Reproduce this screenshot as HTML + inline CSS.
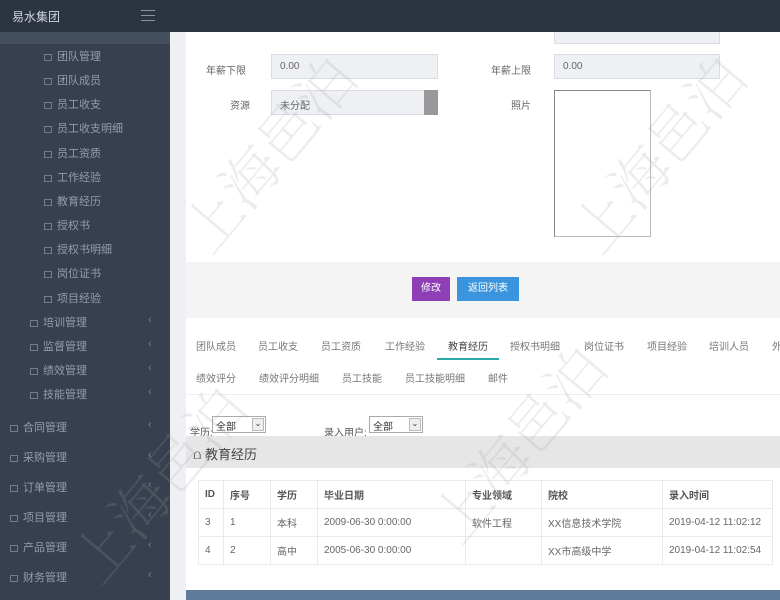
<!DOCTYPE html>
<html><head><meta charset="utf-8"><style>
*{margin:0;padding:0;box-sizing:border-box}
body{width:780px;height:600px;overflow:hidden;position:relative;font-family:"Liberation Sans","Noto Sans CJK SC",sans-serif;font-size:11px;color:#555;background:#fff}
#side{position:absolute;left:0;top:0;width:170px;height:600px;background:#36404f}
#top{position:absolute;left:0;top:0;width:780px;height:32px;background:#2c3441}
#top .logo{position:absolute;left:12px;top:8px;color:#cfd5dc;font-size:12px}
#top .bars{position:absolute;left:141px;top:10px;width:14px}
#top .bars i{display:block;height:1px;background:#8a94a0;margin-bottom:4px}
.it{position:absolute;color:#949daa;font-size:11px;white-space:nowrap}
.it b{display:inline-block;width:8px;height:7px;border:1px solid #737d8b;margin-right:5px;vertical-align:-1px}
.ar{position:absolute;left:148px;color:#737d8b;font-size:11px}
#gut{position:absolute;left:170px;top:32px;width:16px;height:568px;background:#eef0f3}
#main{position:absolute;left:186px;top:32px;width:594px;height:568px;background:#fff}
.lbl{position:absolute;font-size:10px;color:#666}
.inp{position:absolute;background:#eef0f4;border:1px solid #d9dce2;font-size:10px;color:#666;padding:6px 8px}
.btnbar{position:absolute;left:0;top:230px;width:594px;height:56px;background:#f4f4f4}
.btn{position:absolute;height:24px;color:#fff;font-size:10px;text-align:center;line-height:24px}
.tab{position:absolute;font-size:10px;color:#777;white-space:nowrap}
.wm{position:absolute;color:rgba(160,160,160,.2);font-size:58px;transform:rotate(-50deg);white-space:nowrap;font-family:"Noto Serif CJK SC",serif;font-weight:200}
table{position:absolute;left:12px;top:448px;border-collapse:collapse;font-size:10px;color:#666}
td{border:1px solid #eaeaea;height:28px;padding:0 6px;vertical-align:middle}
tr:first-child td{font-weight:bold;color:#555}
</style></head><body>
<div id="side">
<div style="position:absolute;left:0;top:32px;width:170px;height:12px;background:#45505f"></div>
<div class="it" style="left:44px;top:48px"><b></b>团队管理</div>
<div class="it" style="left:44px;top:72px"><b></b>团队成员</div>
<div class="it" style="left:44px;top:96px"><b></b>员工收支</div>
<div class="it" style="left:44px;top:120px"><b></b>员工收支明细</div>
<div class="it" style="left:44px;top:145px"><b></b>员工资质</div>
<div class="it" style="left:44px;top:169px"><b></b>工作经验</div>
<div class="it" style="left:44px;top:193px"><b></b>教育经历</div>
<div class="it" style="left:44px;top:217px"><b></b>授权书</div>
<div class="it" style="left:44px;top:241px"><b></b>授权书明细</div>
<div class="it" style="left:44px;top:265px"><b></b>岗位证书</div>
<div class="it" style="left:44px;top:290px"><b></b>项目经验</div>
<div class="it" style="left:30px;top:314px"><b></b>培训管理</div><span class="ar" style="top:314px">‹</span>
<div class="it" style="left:30px;top:338px"><b></b>监督管理</div><span class="ar" style="top:338px">‹</span>
<div class="it" style="left:30px;top:362px"><b></b>绩效管理</div><span class="ar" style="top:362px">‹</span>
<div class="it" style="left:30px;top:386px"><b></b>技能管理</div><span class="ar" style="top:386px">‹</span>
<div class="it" style="left:10px;top:419px"><b></b>合同管理</div><span class="ar" style="top:419px">‹</span>
<div class="it" style="left:10px;top:449px"><b></b>采购管理</div><span class="ar" style="top:449px">‹</span>
<div class="it" style="left:10px;top:479px"><b></b>订单管理</div><span class="ar" style="top:479px">‹</span>
<div class="it" style="left:10px;top:509px"><b></b>项目管理</div><span class="ar" style="top:509px">‹</span>
<div class="it" style="left:10px;top:539px"><b></b>产品管理</div><span class="ar" style="top:539px">‹</span>
<div class="it" style="left:10px;top:569px"><b></b>财务管理</div><span class="ar" style="top:569px">‹</span>
</div>
<div id="top"><span class="logo">易水集团</span><div class="bars"><i></i><i></i><i></i></div></div>
<div id="gut"></div>
<div id="main">
<div class="inp" style="left:368px;top:0;width:166px;height:12px;border-top:none;padding:0"></div>
<div class="lbl" style="left:20px;top:30px">年薪下限</div>
<div class="inp" style="left:85px;top:22px;width:167px;height:25px">0.00</div>
<div class="lbl" style="left:305px;top:30px">年薪上限</div>
<div class="inp" style="left:368px;top:22px;width:166px;height:25px">0.00</div>
<div class="lbl" style="left:44px;top:65px">资源</div>
<div class="inp" style="left:85px;top:58px;width:167px;height:25px">未分配</div>
<div style="position:absolute;left:238px;top:58px;width:14px;height:25px;background:#999"></div>
<div class="lbl" style="left:325px;top:65px">照片</div>
<div style="position:absolute;left:368px;top:58px;width:97px;height:147px;border:1px solid #bbb;border-top-color:#888;border-left-color:#888"></div>
<div class="btnbar"></div>
<div class="btn" style="left:226px;top:245px;width:38px;background:#8e3fb5">修改</div>
<div class="btn" style="left:271px;top:245px;width:62px;background:#3a95de">返回列表</div>
<div class="tab" style="left:10px;top:306px">团队成员</div>
<div class="tab" style="left:72px;top:306px">员工收支</div>
<div class="tab" style="left:135px;top:306px">员工资质</div>
<div class="tab" style="left:199px;top:306px">工作经验</div>
<div class="tab" style="left:262px;top:306px;color:#444">教育经历</div>
<div style="position:absolute;left:251px;top:326px;width:62px;height:2px;background:#2aa7a7"></div>
<div class="tab" style="left:324px;top:306px">授权书明细</div>
<div class="tab" style="left:398px;top:306px">岗位证书</div>
<div class="tab" style="left:461px;top:306px">项目经验</div>
<div class="tab" style="left:523px;top:306px">培训人员</div>
<div class="tab" style="left:586px;top:306px">外</div>
<div class="tab" style="left:10px;top:338px">绩效评分</div>
<div class="tab" style="left:73px;top:338px">绩效评分明细</div>
<div class="tab" style="left:156px;top:338px">员工技能</div>
<div class="tab" style="left:219px;top:338px">员工技能明细</div>
<div class="tab" style="left:302px;top:338px">邮件</div>
<div style="position:absolute;left:0;top:362px;width:594px;height:1px;background:#eee"></div>
<div class="tab" style="left:4px;top:392px;color:#555">学历:</div>
<div style="position:absolute;left:26px;top:384px;width:54px;height:17px;border:1px solid #aaa;font-size:10px;padding:1px 3px;color:#333">全部<span style="position:absolute;right:1px;top:1px;width:12px;height:13px;border:1px solid #bbb;background:#eee;font-size:8px;text-align:center">⌄</span></div>
<div class="tab" style="left:138px;top:392px;color:#555">录入用户:</div>
<div style="position:absolute;left:183px;top:384px;width:54px;height:17px;border:1px solid #aaa;font-size:10px;padding:1px 3px;color:#333">全部<span style="position:absolute;right:1px;top:1px;width:12px;height:13px;border:1px solid #bbb;background:#eee;font-size:8px;text-align:center">⌄</span></div>
<div style="position:absolute;left:0;top:404px;width:594px;height:32px;background:#e6e6e6;font-size:13px;color:#444;padding:8px 7px">⩍ 教育经历</div>
<table>
<tr><td style="width:25px">ID</td><td style="width:47px">序号</td><td style="width:47px">学历</td><td style="width:148px">毕业日期</td><td style="width:76px">专业领域</td><td style="width:121px">院校</td><td style="width:110px">录入时间</td></tr>
<tr><td>3</td><td>1</td><td>本科</td><td>2009-06-30 0:00:00</td><td>软件工程</td><td>XX信息技术学院</td><td>2019-04-12 11:02:12</td></tr>
<tr><td>4</td><td>2</td><td>高中</td><td>2005-06-30 0:00:00</td><td></td><td>XX市高级中学</td><td>2019-04-12 11:02:54</td></tr>
</table>
<div style="position:absolute;left:0;top:558px;width:594px;height:10px;background:#607b9a"></div>
</div>
<div class="wm" style="left:150px;top:110px">上海邑泊</div>
<div class="wm" style="left:540px;top:110px">上海邑泊</div>
<div class="wm" style="left:40px;top:440px">上海邑泊</div>
<div class="wm" style="left:400px;top:400px">上海邑泊</div>
</body></html>
